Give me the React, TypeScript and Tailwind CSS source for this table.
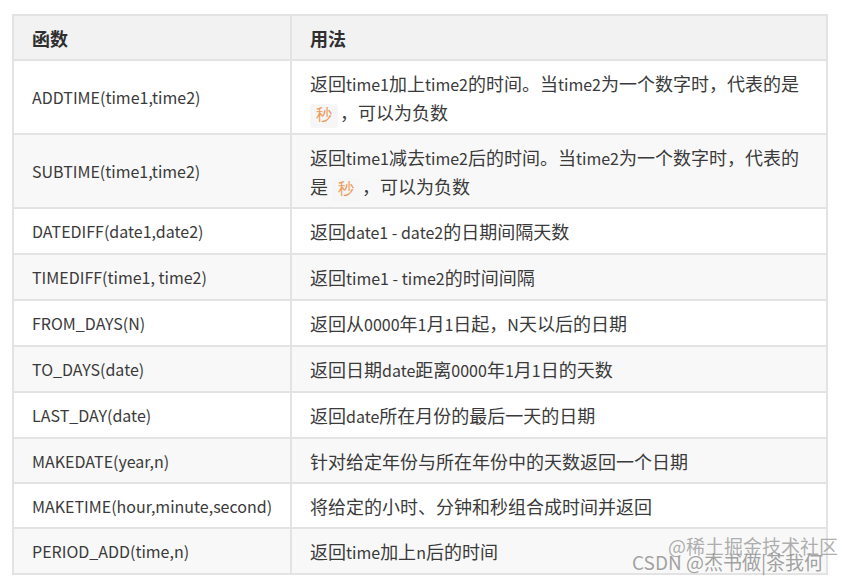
import React from 'react';

interface Row {
  fn: string;
  usage: React.ReactNode;
}

// latin runs in the reference are narrower than the CJK glyphs, so give them a smaller size
function Mixed({ text }: { text: string }) {
  const parts = text.split(/([A-Za-z0-9 ,\-]+)/).filter(Boolean);
  return (
    <>
      {parts.map((p, i) =>
        /^[A-Za-z0-9 ,\-]+$/.test(p) && !/^\s+$/.test(p) ? (
          <span key={i} className="text-[16px]">{p}</span>
        ) : (
          <React.Fragment key={i}>{p}</React.Fragment>
        )
      )}
    </>
  );
}

const Sec = () => (
  <code className="mr-[2px] rounded-[3px] bg-[#f6f6f6] px-[6px] py-[3px] text-[16px] leading-none text-[#ec9a55]">秒</code>
);

const rows: Row[] = [
  {
    fn: 'ADDTIME(time1,time2)',
    usage: (
      <>
        <Mixed text="返回time1加上time2的时间。当time2为一个数字时，代表的是" />
        <br />
        <Sec />，可以为负数
      </>
    ),
  },
  {
    fn: 'SUBTIME(time1,time2)',
    usage: (
      <>
        <Mixed text="返回time1减去time2后的时间。当time2为一个数字时，代表的" />
        <br />
        是 <Sec />，可以为负数
      </>
    ),
  },
  { fn: 'DATEDIFF(date1,date2)', usage: <Mixed text="返回date1 - date2的日期间隔天数" /> },
  { fn: 'TIMEDIFF(time1, time2)', usage: <Mixed text="返回time1 - time2的时间间隔" /> },
  { fn: 'FROM_DAYS(N)', usage: <Mixed text="返回从0000年1月1日起，N天以后的日期" /> },
  { fn: 'TO_DAYS(date)', usage: <Mixed text="返回日期date距离0000年1月1日的天数" /> },
  { fn: 'LAST_DAY(date)', usage: <Mixed text="返回date所在月份的最后一天的日期" /> },
  { fn: 'MAKEDATE(year,n)', usage: '针对给定年份与所在年份中的天数返回一个日期' },
  { fn: 'MAKETIME(hour,minute,second)', usage: '将给定的小时、分钟和秒组合成时间并返回' },
  { fn: 'PERIOD_ADD(time,n)', usage: <Mixed text="返回time加上n后的时间" /> },
];

export default function App() {
  return (
    <div
      className="relative h-[585px] w-[842px] overflow-hidden bg-white pl-[12px] pt-[14px]"
      style={{ fontFamily: '"Noto Sans CJK SC", "Noto Sans", sans-serif' }}
    >
      <table className="w-[816px] table-fixed border-collapse border-2 border-[#e3e3e3] text-[18px] leading-[28px] text-[#3a3a3a]">
        <colgroup>
          <col className="w-[278px]" />
          <col />
        </colgroup>
        <thead>
          <tr className="bg-[#f2f2f2]">
            <th className="border-2 border-[#e3e3e3] px-[18px] py-[7.5px] text-left font-bold text-[#2f2f2f]">函数</th>
            <th className="border-2 border-[#e3e3e3] px-[18px] py-[7.5px] text-left font-bold text-[#2f2f2f]">用法</th>
          </tr>
        </thead>
        <tbody>
          {rows.map((row, i) => (
            <tr key={row.fn} className={i % 2 === 1 ? 'bg-[#f8f8f8]' : 'bg-white'}>
              <td className={`border-2 border-[#e3e3e3] px-[18px] text-[16px] ${i === 1 ? 'py-[8.5px]' : 'py-[7.5px]'}`}>{row.fn}</td>
              <td className="whitespace-nowrap border-2 border-[#e3e3e3] px-[18px] py-[7.5px]">{row.usage}</td>
            </tr>
          ))}
        </tbody>
      </table>

      {/* overlapping watermarks */}
      <div className="pointer-events-none absolute left-[668px] top-[534px] text-[19px] leading-[24px] text-[#9a9a9a]/80">
        @稀土掘金技术社区
      </div>
      <div className="pointer-events-none absolute left-[632px] top-[550px] text-[19px] leading-[24px] text-[#8a8a8a]/80">
        CSDN @杰书做|茶我何
      </div>
    </div>
  );
}
